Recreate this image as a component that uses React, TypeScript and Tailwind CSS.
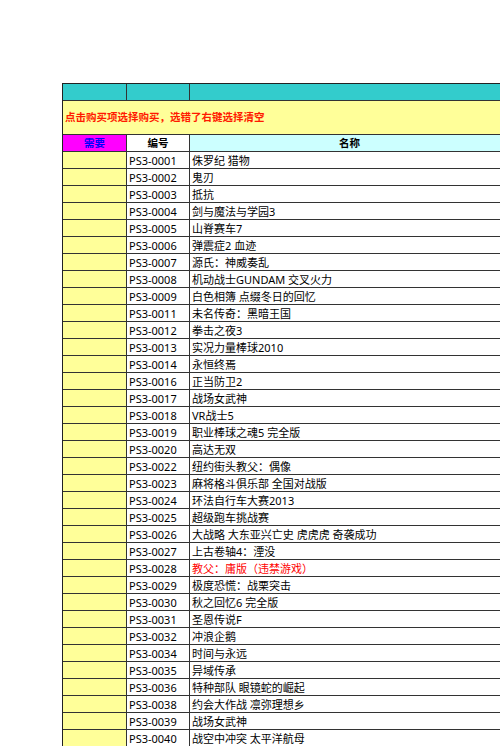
const rows: [string, string, boolean?][] = [
  ["PS3-0001", "侏罗纪 猎物"],
  ["PS3-0002", "鬼刃"],
  ["PS3-0003", "抵抗"],
  ["PS3-0004", "剑与魔法与学园3"],
  ["PS3-0005", "山脊赛车7"],
  ["PS3-0006", "弹震症2 血迹"],
  ["PS3-0007", "源氏：神威奏乱"],
  ["PS3-0008", "机动战士GUNDAM 交叉火力"],
  ["PS3-0009", "白色相簿 点缀冬日的回忆"],
  ["PS3-0011", "未名传奇：黑暗王国"],
  ["PS3-0012", "拳击之夜3"],
  ["PS3-0013", "实况力量棒球2010"],
  ["PS3-0014", "永恒终焉"],
  ["PS3-0016", "正当防卫2"],
  ["PS3-0017", "战场女武神"],
  ["PS3-0018", "VR战士5"],
  ["PS3-0019", "职业棒球之魂5 完全版"],
  ["PS3-0020", "高达无双"],
  ["PS3-0022", "纽约街头教父：偶像"],
  ["PS3-0023", "麻将格斗俱乐部 全国对战版"],
  ["PS3-0024", "环法自行车大赛2013"],
  ["PS3-0025", "超级跑车挑战赛"],
  ["PS3-0026", "大战略 大东亚兴亡史 虎虎虎 奇袭成功"],
  ["PS3-0027", "上古卷轴4：湮没"],
  ["PS3-0028", "教父：庸版（违禁游戏）", true],
  ["PS3-0029", "极度恐慌：战栗突击"],
  ["PS3-0030", "秋之回忆6 完全版"],
  ["PS3-0031", "圣恩传说F"],
  ["PS3-0032", "冲浪企鹅"],
  ["PS3-0034", "时间与永远"],
  ["PS3-0035", "异域传承"],
  ["PS3-0036", "特种部队 眼镜蛇的崛起"],
  ["PS3-0038", "约会大作战 凛弥理想乡"],
  ["PS3-0039", "战场女武神"],
  ["PS3-0040", "战空中冲突 太平洋航母"],
];

const cell = "border-r border-b border-[#333] h-[17px] flex items-center whitespace-nowrap overflow-hidden";

export default function App() {
  return (
    <div
      className="w-[500px] h-[746px] overflow-hidden bg-white text-[10.5px] leading-none text-black"
      style={{ fontFamily: '"Noto Sans", "Noto Sans CJK SC", sans-serif' }}
    >
      <div className="pt-[83px] pl-[62px]">
        <div className="grid grid-cols-[64px_63px_320px] w-[447px] border-l border-t border-[#222]">
          {/* top cyan band */}
          <div className="bg-[#33cccc] h-[17px] border-r border-b border-[#333]" />
          <div className="bg-[#33cccc] h-[17px] border-r border-b border-[#333]" />
          <div className="bg-[#33cccc] h-[17px] border-b border-[#333]" />

          {/* instructions */}
          <div className="col-span-3 bg-[#ffff99] h-[34px] border-b border-[#333] flex items-center pl-[2px] font-bold text-[#ff1a00]">
            点击购买项选择购买，选错了右键选择清空
          </div>

          {/* header */}
          <div className={`${cell} bg-[#ff00ff] justify-center font-bold text-[#0000ff]`}>需要</div>
          <div className={`${cell} bg-white justify-center font-bold`}>编号</div>
          <div className={`${cell} bg-[#ccffff] justify-center font-bold`}>名称</div>

          {rows.map(([code, name, banned]) => (
            <div key={code} className="contents">
              <div className={`${cell} bg-[#ffff99]`} />
              <div className={`${cell} bg-white pl-[2px] text-[11px]`}>{code}</div>
              <div className={`${cell} bg-white pl-[2px] text-[11px] ${banned ? "text-[#ff0000]" : ""}`}>{name}</div>
            </div>
          ))}
        </div>
      </div>
    </div>
  );
}
